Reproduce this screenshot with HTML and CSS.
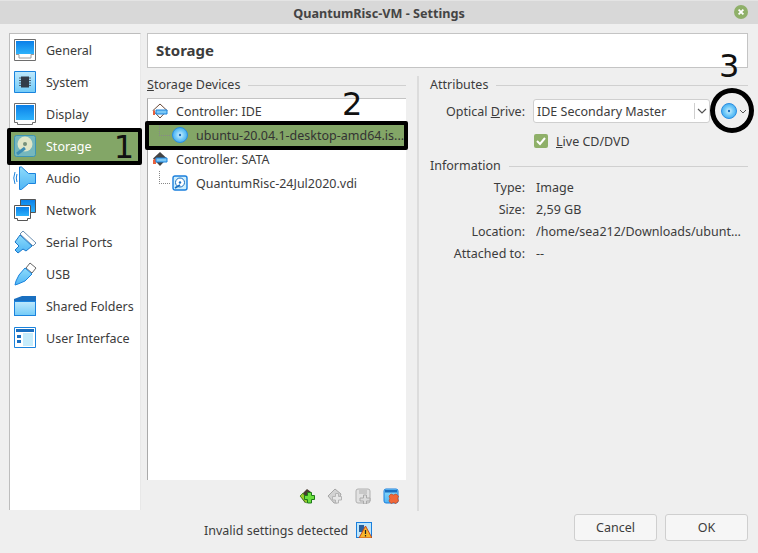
FILE: index.html
```html
<!DOCTYPE html>
<html lang="en">
<head>
<meta charset="utf-8">
<title>QuantumRisc-VM - Settings</title>
<link rel="stylesheet" href="styles.css">
</head>
<body>
<svg class="defs" width="0" height="0" aria-hidden="true">
  <defs>
    <linearGradient id="gScreen" x1="0" y1="0" x2="0" y2="1"><stop offset="0" stop-color="#0a7fe8"/><stop offset="1" stop-color="#2db2fb"/></linearGradient>
    <linearGradient id="gLight" x1="0" y1="0" x2="0" y2="1"><stop offset="0" stop-color="#8edbfb"/><stop offset="1" stop-color="#4fb5f5"/></linearGradient>
    <linearGradient id="gPale" x1="0" y1="0" x2="0" y2="1"><stop offset="0" stop-color="#bfe9fc"/><stop offset="1" stop-color="#72cbf8"/></linearGradient>
    <radialGradient id="gDisc"><stop offset="0" stop-color="#d8f4fe"/><stop offset=".55" stop-color="#79cdf8"/><stop offset="1" stop-color="#45aef2"/></radialGradient>
  </defs>
</svg>
<div class="window">
  <header class="titlebar">
    <span class="title">QuantumRisc-VM - Settings</span>
    <span class="close"><svg width="14" height="14" viewBox="0 0 14 14"><circle cx="7" cy="7" r="7" fill="#8fb069"/><path d="M4.600 4.600l4.800 4.800M9.400 4.600l-4.800 4.800" stroke="#fff" stroke-width="1.800"/></svg></span>
  </header>
  <div class="main">
    <nav class="sidebar">
      <div class="nav-item"><svg class="nav-icon" viewBox="0 0 24 24"><path d="M1.500 1.500h21v21h-21z" fill="#fff" stroke="#6e6e6e"/><path d="M3 3h18v13H3z" fill="url(#gScreen)"/><path d="M3 16.500h3v3.500h12v-3.500h3" fill="none" stroke="#9a9a9a"/></svg><span>General</span></div>
      <div class="nav-item"><svg class="nav-icon" viewBox="0 0 24 24"><path d="M1.500 1.500h21v21h-21z" fill="url(#gPale)" stroke="#1a83dd"/><path d="M8 6.500h8v11H8z" fill="#333c48"/><path d="M6 8h2M6 10.500h2M6 13h2M6 15.500h2M16 8h2M16 10.500h2M16 13h2M16 15.500h2" stroke="#4a6478"/></svg><span>System</span></div>
      <div class="nav-item"><svg class="nav-icon" viewBox="0 0 24 24"><path d="M1.500 1.500h21v19h-3v2h-15v-2h-3z" fill="#fff" stroke="#6e6e6e"/><path d="M3 3h18v15H3z" fill="url(#gScreen)"/></svg><span>Display</span></div>
      <div class="nav-item nav-selected"><svg class="nav-icon" viewBox="0 0 24 24"><rect x="1.500" y="1.500" width="21" height="21" rx="2" fill="#75b7bd" stroke="#3d94b4"/><circle cx="12" cy="10" r="7.500" fill="#dfe6c8"/><circle cx="12" cy="10" r="2" fill="#75917a"/><path d="M4 20l8-6" stroke="#3d8db4" stroke-width="3"/></svg><span>Storage</span></div>
      <div class="nav-item"><svg class="nav-icon" viewBox="0 0 24 24"><path d="M6.500 1h2l7 6.500h7v10h-7l-7 6h-2z" fill="url(#gLight)" stroke="#1a83dd"/><path d="M4 8q-1.500 4 0 8M2 6q-2.500 6 0 12" fill="none" stroke="#1a83dd"/></svg><span>Audio</span></div>
      <div class="nav-item"><svg class="nav-icon" viewBox="0 0 24 24"><path d="M7.500 1.500h15v13h-15z" fill="url(#gScreen)" stroke="#555"/><path d="M1.500 7.500h16v13h-3v2h-10v-2h-3z" fill="#fff" stroke="#555"/><path d="M3 9h13v9H3z" fill="url(#gScreen)"/></svg><span>Network</span></div>
      <div class="nav-item"><svg class="nav-icon" viewBox="0 0 24 24"><path d="M10 1l13 12-3 3L7 4z" fill="#fff" stroke="#6c8fb0"/><path d="M7 5l12 11-6 5-3-2-5 4-3-3 4-4-4-4z" fill="url(#gLight)" stroke="#1a78cc"/></svg><span>Serial Ports</span></div>
      <div class="nav-item"><svg class="nav-icon" viewBox="0 0 24 24"><path d="M17 1l6 5-4 5-6-5z" fill="#fff" stroke="#666"/><path d="M12 6l7 6-7 7-7 3-3 1 1-4 3-6z" fill="url(#gLight)" stroke="#1a83dd"/></svg><span>USB</span></div>
      <div class="nav-item"><svg class="nav-icon" viewBox="0 0 24 24"><path d="M1 22V5l8-3h14v20z" fill="#1a6fc0"/><path d="M1.500 7.500h21v14h-21z" fill="url(#gPale)" stroke="#1a83dd"/></svg><span>Shared Folders</span></div>
      <div class="nav-item"><svg class="nav-icon" viewBox="0 0 24 24"><path d="M1.500 1.500h21v20h-21z" fill="#fff" stroke="#1a83dd"/><path d="M3 3h18v3H3z" fill="#1a6fc0"/><path d="M10 7h10v13H10z" fill="#c6ecfb"/><path d="M4 9h4v3H4zM4 14h4v3H4z" fill="#1a6fc0"/></svg><span>User Interface</span></div>
    </nav>
    <section class="content">
      <h1 class="page-title">Storage</h1>
      <div class="panes">
        <div class="devices">
          <div class="group-head"><span><u>S</u>torage Devices</span><i class="rule"></i></div>
          <div class="tree">
            <div class="tree-row"><svg class="ico" viewBox="0 0 16 16"><path d="M8 1l7 6.500-7 7.500-7-7.500z" fill="#fff" stroke="#6a4a3a"/><path d="M1 8l2-1v5H1z" fill="#e8603c"/><path d="M4 7h11v4H4z" fill="#7cc8f5" stroke="#1a83dd"/></svg><span>Controller: IDE</span></div>
            <div class="tree-row tree-child tree-selected"><i class="branch"></i><svg class="ico" viewBox="0 0 16 16"><circle cx="8" cy="8" r="7.500" fill="url(#gDisc)" stroke="#2a8ee0"/><circle cx="8" cy="8" r="1.200" fill="#1a6fc0"/></svg><span class="ellipsis">ubuntu-20.04.1-desktop-amd64.is...</span></div>
            <div class="tree-row"><svg class="ico" viewBox="0 0 16 16"><path d="M8 1l7 6.500-7 7.500-7-7.500z" fill="#444"/><path d="M1 9l3-2v6H1z" fill="#e8603c"/><path d="M4 7h11v4H4z" fill="#7cc8f5" stroke="#1a83dd"/></svg><span>Controller: SATA</span></div>
            <div class="tree-row tree-child"><i class="branch"></i><svg class="ico" viewBox="0 0 16 16"><rect x="1" y="1" width="14" height="14" rx="2" fill="#cfeffc" stroke="#1a7fdd" stroke-width="1.400"/><circle cx="8" cy="7.500" r="4.500" fill="#fff" stroke="#1a6fc0"/><circle cx="8" cy="7.500" r="1.200" fill="#1a6fc0"/><path d="M3 13l5-3" stroke="#1a6fc0" stroke-width="1.600"/></svg><span>QuantumRisc-24Jul2020.vdi</span></div>
          </div>
          <div class="toolbar">
            <svg class="tool" viewBox="0 0 16 16"><path d="M1 8l7-7 4 3-6 11z" fill="#4a3a30"/><path d="M1 8l3-3 5 9-2 1z" fill="#9ccc2e" stroke="#2c7a1a" stroke-width=".6"/><path d="M8.500 4.500h4v3h3v4h-3v3.500h-4v-3.500h-3v-4h3z" fill="#6be03e" stroke="#1f7a1a"/></svg>
            <svg class="tool" viewBox="0 0 16 16"><path d="M1 8l7-7 6 5-4 9H7z" fill="#d2d2d2" stroke="#a5a5a5"/><path d="M8.500 5.500h3v3h3v3.500h-3v3h-3v-3h-3v-3.500h3z" fill="#e6e6e6" stroke="#b5b5b5"/></svg>
            <svg class="tool" viewBox="0 0 16 16"><rect x="1" y="1" width="14" height="14" rx="2" fill="#e2e2e2" stroke="#b0b0b0"/><path d="M4 2h8v4H4z" fill="#c8c8c8"/><path d="M8.500 7h3v3h3.500v3h-3.500v3h-3v-3H5v-3h3.500z" fill="#dcdcdc" stroke="#aaa"/></svg>
            <svg class="tool" viewBox="0 0 16 16"><rect x="1" y="1" width="14" height="14" rx="2" fill="url(#gLight)" stroke="#1a7fdd"/><path d="M2 2h12v2.500H2z" fill="#1a6fc0"/><path d="M8 6l2.500 1 2.500-1 2.500 2-.8 2.500.8 2.500-2.500 2.500-2.500-1-2.500 1L6 13l.8-2.500L6 8z" fill="#f0683a" stroke="#c4481f" stroke-width=".7"/></svg>
          </div>
        </div>
        <div class="attributes">
          <div class="group-head"><span>Attributes</span><i class="rule"></i></div>
          <div class="field-row">
            <label class="field-label">Optical <u>D</u>rive:</label>
            <div class="combo"><span class="combo-text">IDE Secondary Master</span><span class="combo-arrow"><svg width="10" height="6" viewBox="0 0 10 6"><path d="M1 1l4 4 4-4" fill="none" stroke="#555" stroke-width="1.200"/></svg></span></div>
            <span class="disc-btn"><svg width="16" height="16" viewBox="0 0 16 16"><circle cx="8" cy="8" r="7.500" fill="url(#gDisc)" stroke="#2a8ee0"/><circle cx="8" cy="8" r="1.200" fill="#1a6fc0"/></svg><svg width="8" height="5" viewBox="0 0 8 5"><path d="M1 1l3 3 3-3" fill="none" stroke="#555"/></svg></span>
          </div>
          <div class="check-row"><span class="check"><svg width="14" height="14" viewBox="0 0 14 14"><path d="M3 7l3 3 5-6" fill="none" stroke="#fff" stroke-width="2"/></svg></span><span><u>L</u>ive CD/DVD</span></div>
          <div class="group-head info-head"><span>Information</span><i class="rule"></i></div>
          <dl class="info">
            <dt>Type:</dt><dd>Image</dd>
            <dt>Size:</dt><dd>2,59 GB</dd>
            <dt>Location:</dt><dd>/home/sea212/Downloads/ubunt…</dd>
            <dt>Attached to:</dt><dd>--</dd>
          </dl>
        </div>
      </div>
    </section>
  </div>
  <footer class="footer">
    <div class="warning"><span>Invalid settings detected</span><svg class="warn-icon" viewBox="0 0 16 16"><rect x=".5" y=".5" width="15" height="15" fill="#bfe6fb" stroke="#1a7fdd"/><path d="M3 3h5v7H3z" fill="#2a5f9a"/><path d="M9.500 4L16 16H3z" fill="#f8b62a" stroke="#c4481f"/><path d="M9.500 8v4M9.500 13v1.500" stroke="#222" stroke-width="1.200"/></svg></div>
    <button class="btn cancel">Cancel</button>
    <button class="btn">OK</button>
  </footer>
  <div class="mark mark-1"><span class="mark-num">1</span></div>
  <div class="mark mark-2"></div>
  <span class="num num-2">2</span>
  <span class="num num-3">3</span>
  <div class="ring"></div>
</div>
</body>
</html>
```
FILE: styles.css
```css
* { box-sizing: border-box; }
html, body { margin: 0; padding: 0; }
body { font-family: "Noto Sans", sans-serif; font-size: 12.500px; color: #3c3c3c; background: #efefef; }
.defs { position: absolute; }
.window { position: relative; width: 758px; height: 553px; display: flex; flex-direction: column; overflow: hidden; background: #efefef; }
.titlebar { height: 24px; flex: none; background: #d8d8d8; border-top: 1px solid #e4e4e4; display: flex; align-items: center; justify-content: center; position: relative; }
.title { font-weight: 700; font-size: 12.650px; color: #444; }
.close { position: absolute; right: 10px; top: 4px; width: 14px; height: 14px; display: flex; }
.main { flex: 1; display: flex; padding: 9px 10px 0 9px; gap: 6px; min-height: 0; }
.sidebar { width: 132px; height: 477px; flex: none; background: #fff; border: 1px solid #bdbdbd; border-right-color: #e8e8e8; border-bottom: none; }
.nav-item { height: 32px; display: flex; align-items: center; padding-left: 3px; gap: 9px; }
.nav-icon { width: 24px; height: 24px; flex: none; }
.nav-selected { background: #83a667; color: #fff; }
.content { flex: 1; min-width: 0; display: flex; flex-direction: column; }
.page-title { margin: 0; height: 35px; flex: none; background: #fff; border: 1px solid #c4c4c4; font-size: 15px; font-weight: 700; line-height: 33px; padding-left: 8px; color: #3c3c3c; }
.panes { flex: 1; display: flex; min-height: 0; padding-top: 8px; }
.devices { width: 259px; flex: none; display: flex; flex-direction: column; }
.group-head { display: flex; align-items: center; gap: 8px; height: 18px; line-height: 18px; }
.rule { flex: 1; height: 1px; background: #d0d0d0; }
.tree { height: 382px; margin-top: 4px; background: #fff; border-left: 1px solid #aaa; border-top: 1px solid #c4c4c4; }
.tree-row { height: 24px; display: flex; align-items: center; padding-left: 4px; gap: 8px; position: relative; white-space: nowrap; }
.ico { width: 16px; height: 16px; flex: none; }
.tree-child { padding-left: 24px; gap: 8px; }
.tree-selected { background: #83a667; color: #333; }
.branch { position: absolute; left: 11px; top: 0; width: 11px; height: 13px; border-left: 1px dotted #888; border-bottom: 1px dotted #888; }
.ellipsis { overflow: hidden; }
.toolbar { display: flex; justify-content: flex-end; gap: 12px; padding: 8px 7px 0 0; }
.tool { width: 16px; height: 16px; }
.attributes { flex: 1; min-width: 0; margin-left: 11px; padding-left: 11px; border-left: 2px solid #dcdcdc; height: 435px; }
.field-row { display: flex; align-items: center; margin-top: 5px; height: 24px; }
.field-label { width: 95px; text-align: right; flex: none; }
.combo { margin-left: 8px; width: 177px; height: 24px; background: #fff; border: 1px solid #cfcfcf; border-radius: 3px; display: flex; align-items: center; justify-content: space-between; padding-left: 3px; }
.combo-arrow { width: 15px; height: 16px; border-left: 1px solid #cfcfcf; display: flex; align-items: center; justify-content: center; }
.disc-btn { margin-left: 11px; display: flex; align-items: center; gap: 2px; }
.check-row { display: flex; align-items: center; gap: 8px; margin: 8px 0 0 104px; height: 20px; }
.check { width: 14px; height: 14px; background: #8fb069; border-radius: 2px; display: flex; }
.info-head { margin-top: 6px; }
.info { display: grid; grid-template-columns: 95px 1fr; column-gap: 11px; row-gap: 0; margin: 2px 0 0; }
.info dt { text-align: right; height: 22px; line-height: 22px; }
.info dd { margin: 0; height: 22px; line-height: 22px; white-space: nowrap; overflow: hidden; }
.footer { height: 44px; flex: none; display: flex; align-items: flex-start; padding: 5px 10px 0 0; }
.warning { margin: 3px auto 0 204px; display: flex; align-items: center; gap: 8px; height: 26px; }
.warn-icon { width: 16px; height: 16px; }
.btn { width: 83px; height: 27px; background: #f6f6f6; border: 1px solid #cfcfcf; border-radius: 3px; font: inherit; color: #3c3c3c; padding: 0; }
.cancel { margin-right: 8px; }
.mark { position: absolute; border: 4px solid #000; border-radius: 2px; }
.mark-1 { left: 7px; top: 128px; width: 135px; height: 37px; }
.mark-num { position: absolute; right: 4px; top: -7px; font-size: 32px; line-height: 44px; color: #111; font-family: "DejaVu Sans", sans-serif; font-weight: 400; }
.mark-2 { left: 145px; top: 121px; width: 263px; height: 29px; }
.num { position: absolute; font-family: "DejaVu Sans", sans-serif; font-size: 32px; line-height: 36px; color: #111; }
.num-2 { left: 342px; top: 86px; }
.num-3 { left: 719px; top: 48px; }
.ring { position: absolute; left: 710px; top: 88px; width: 44px; height: 45px; border: 5px solid #000; border-radius: 50%; }
```
